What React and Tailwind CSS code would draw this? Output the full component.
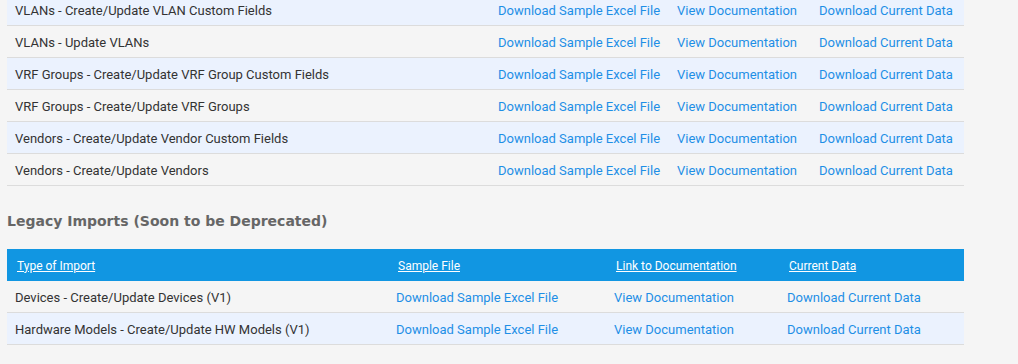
import React from 'react';

const modernRows = [
  'VLANs - Create/Update VLAN Custom Fields',
  'VLANs - Update VLANs',
  'VRF Groups - Create/Update VRF Group Custom Fields',
  'VRF Groups - Create/Update VRF Groups',
  'Vendors - Create/Update Vendor Custom Fields',
  'Vendors - Create/Update Vendors',
];

const legacyRows = [
  'Devices - Create/Update Devices (V1)',
  'Hardware Models - Create/Update HW Models (V1)',
];

const linkClass = 'text-[#1e8fe6] cursor-pointer hover:underline';

const App = () => {
  return (
    <div className="min-h-[364px] bg-[#f5f5f5] pl-[7px] font-['Roboto',sans-serif] text-[13px] text-[#333] overflow-hidden">
      <div className="w-[957px]">
        {/* Modern imports (scrolled) */}
        <div className="-mt-[6px]">
          {modernRows.map((name, i) => (
            <div
              key={name}
              className={`flex items-center h-[32px] pt-[2px] border-b border-[#dcdcdc] ${i % 2 === 0 ? 'bg-[#ebf2fe]' : ''}`}
            >
              <div className="w-[491px] pl-[8px]">{name}</div>
              <div className="w-[179px]"><span className={linkClass}>Download Sample Excel File</span></div>
              <div className="w-[142px]"><span className={linkClass}>View Documentation</span></div>
              <div className="flex-1"><span className={linkClass}>Download Current Data</span></div>
            </div>
          ))}
        </div>

        <h3 className="mt-[25px] mb-[18px] font-['DejaVu_Sans',sans-serif] font-bold text-[14px] text-[#666] leading-[20px]">
          Legacy Imports (Soon to be Deprecated)
        </h3>

        <div>
          <div className="flex items-center h-[32px] pt-px bg-[#1196e2] text-white text-[12px]">
            <div className="w-[391px] pl-[10px]"><span className="underline">Type of Import</span></div>
            <div className="w-[218px]"><span className="underline">Sample File</span></div>
            <div className="w-[173px]"><span className="underline">Link to Documentation</span></div>
            <div className="flex-1"><span className="underline">Current Data</span></div>
          </div>
          {legacyRows.map((name, i) => (
            <div
              key={name}
              className={`flex items-center h-[32px] pt-[2px] border-b border-[#dcdcdc] ${i % 2 === 1 ? 'bg-[#ebf2fe]' : ''}`}
            >
              <div className="w-[389px] pl-[8px]">{name}</div>
              <div className="w-[218px]"><span className={linkClass}>Download Sample Excel File</span></div>
              <div className="w-[173px]"><span className={linkClass}>View Documentation</span></div>
              <div className="flex-1"><span className={linkClass}>Download Current Data</span></div>
            </div>
          ))}
        </div>
      </div>
    </div>
  );
};

export default App;
